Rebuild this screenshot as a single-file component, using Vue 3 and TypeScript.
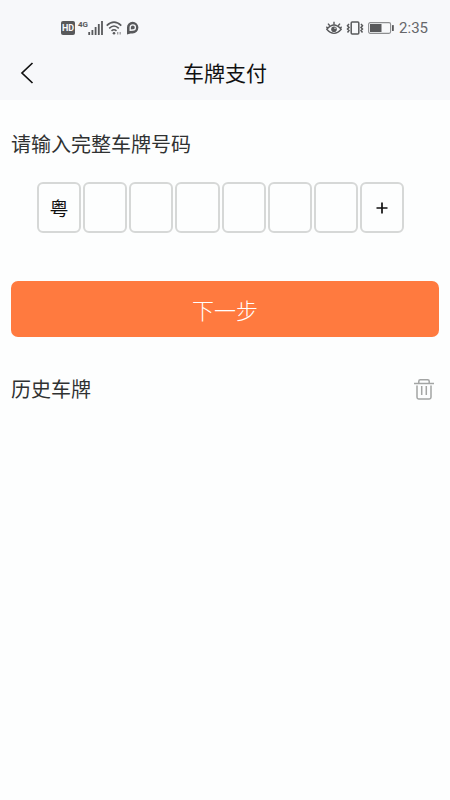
<script setup lang="ts">
import { ref } from 'vue'

const province = ref('粤')
const digits = ref<string[]>(['', '', '', '', '', ''])
const extended = ref(false)
</script>

<template>
  <div class="page">
    <header class="top">
      <div class="status">
        <div class="status-group left">
          <span class="hd">HD</span>
          <div class="signal">
            <span class="network">4G</span>
            <svg width="15" height="14" viewBox="0 0 15 14">
              <path d="M1.2 14v-3M4.4 14V9M7.6 14V6M10.8 14V3M14 14V0" stroke="#58595b" stroke-width="1.8" />
            </svg>
          </div>
          <svg class="status-icon" width="17" height="14" viewBox="0 0 17 14">
            <g fill="none" stroke="#58595b" stroke-width="1.6">
              <path d="M.7 4.6q7.3-7 14.6 0" />
              <path d="M3.2 7.3q4.8-4.6 9.6 0" />
              <path d="M5.5 9.9q2.5-2.3 5 0" />
            </g>
            <circle cx="8" cy="12.2" r="1.3" fill="#58595b" />
            <path d="M11.7 11v2.5M14.2 11v2.5" stroke="#9a9b9d" stroke-width="1.3" />
          </svg>
          <svg class="status-icon" width="13" height="14" viewBox="0 0 13 14">
            <path d="M6.6.8a5.8 5.8 0 0 1 0 11.6H4.6L1 13.4V6.6A5.7 5.7 0 0 1 6.6.8z" fill="#58595b" />
            <path d="M4.2 9.2V6.4a2.6 2.6 0 1 1 2.6 2.6z" fill="none" stroke="#f7f8fa" stroke-width="1.3" />
            <circle cx="6.8" cy="6.5" r="1.2" fill="#58595b" />
          </svg>
        </div>
        <div class="status-group">
          <svg class="status-icon" width="16" height="14" viewBox="0 0 16 14">
            <g fill="none" stroke="#58595b" stroke-width="1.4">
              <path d="M.8 8.3Q8-.3 15.2 8.3Q8 16.5.8 8.3z" />
              <path d="M8 3.8V.8M3.8 4.8L2 2.6M12.2 4.8L14 2.6M1.8 7L.3 5.8M14.2 7l1.5-1.2" />
            </g>
            <circle cx="8" cy="8.2" r="2.8" fill="#58595b" />
            <circle cx="9" cy="7.3" r=".7" fill="#f7f8fa" />
          </svg>
          <svg class="status-icon" width="18" height="14" viewBox="0 0 18 14">
            <g fill="none" stroke="#58595b" stroke-width="1.5">
              <rect x="5.2" y=".9" width="7.6" height="12.2" rx="1" />
              <path d="M3 3L1.5 4.8 3 6.4 1.5 8 3 9.6 1.5 11.4M15 3l1.5 1.8L15 6.4 16.5 8 15 9.6l1.5 1.8" />
            </g>
          </svg>
          <svg class="status-icon" width="26" height="12" viewBox="0 0 26 12">
            <rect x=".6" y=".6" width="22" height="10.8" rx="1.6" fill="none" stroke="#8d8e90" stroke-width="1.1" />
            <rect x="2" y="2" width="11.5" height="8" fill="#58595b" />
            <rect x="24" y="3" width="1.8" height="6" rx=".6" fill="#58595b" />
          </svg>
          <time class="clock">2:35</time>
        </div>
      </div>
      <nav class="nav">
        <button class="back" type="button" aria-label="返回">
          <svg width="14" height="22" viewBox="0 0 14 22">
            <path d="M12.5 1L2 11l10.5 10" fill="none" stroke="#111" stroke-width="1.7" />
          </svg>
        </button>
        <h1 class="title">车牌支付</h1>
      </nav>
    </header>

    <main class="content">
      <h2 class="heading">请输入完整车牌号码</h2>
      <form class="form" @submit.prevent>
        <div class="plate">
          <input v-model="province" class="cell" type="text" maxlength="1" aria-label="省份" />
          <input
            v-for="(_, i) in digits"
            :key="i"
            v-model="digits[i]"
            class="cell"
            type="text"
            maxlength="1"
            :aria-label="`第${i + 2}位`"
          />
          <button class="cell add" type="button" aria-label="新能源车牌" @click="extended = !extended">
            <svg width="12" height="12" viewBox="0 0 12 12">
              <path d="M6 .5v11M.5 6h11" stroke="#111" stroke-width="1.7" />
            </svg>
          </button>
        </div>
        <button class="next" type="submit">下一步</button>
      </form>
      <section class="history">
        <h2 class="heading">历史车牌</h2>
        <button class="clear" type="button" aria-label="清空历史">
          <svg width="20" height="22" viewBox="0 0 20 22">
            <g fill="none" stroke="#a3a5a4" stroke-width="1.5">
              <path d="M0 4.5h20" />
              <path d="M4.8 4V2.2Q4.8.8 6.3.8h7.4q1.5 0 1.5 1.4V4" />
              <path d="M3 6.5v11.8q0 1.7 1.7 1.7h10.6q1.7 0 1.7-1.7V6.5" />
              <path d="M7.7 7v9M12.3 7v9" />
            </g>
          </svg>
        </button>
      </section>
    </main>
  </div>
</template>

<style>
body {
  margin: 0;
  background: #fdfefe;
}
</style>

<style scoped>
.page {
  min-height: 100vh;
  background: #fdfefe;
  color: #303232;
  font-family: Roboto, "Noto Sans CJK SC", sans-serif;
}

button,
input {
  box-sizing: border-box;
  margin: 0;
  padding: 0;
  border: 0;
  background: none;
  color: inherit;
  font-family: inherit;
}

button {
  display: flex;
  align-items: center;
  justify-content: center;
  cursor: pointer;
}

svg {
  display: block;
}

.top {
  background: #f7f8fa;
}

.status {
  display: flex;
  align-items: center;
  justify-content: space-between;
  box-sizing: border-box;
  height: 48px;
  padding: 8px 22px 0 61px;
}

.status-group {
  display: flex;
  align-items: center;
  gap: 4px;
}

.left {
  gap: 3px;
}

.status-icon {
  flex: none;
}

.hd {
  width: 14px;
  border-radius: 2px;
  background: #58595b;
  color: #f7f8fa;
  font-size: 9px;
  font-weight: 700;
  line-height: 14px;
  text-align: center;
}

.signal {
  display: flex;
  align-items: flex-start;
}

.network {
  color: #58595b;
  font-family: "Liberation Sans Narrow", Roboto, sans-serif;
  font-size: 8px;
  font-weight: 700;
  line-height: 8px;
}

.clock {
  padding-left: 1px;
  color: #66676a;
  font-size: 15px;
  line-height: 20px;
}

.nav {
  display: grid;
  grid-template-columns: 54px 1fr 54px;
  align-items: center;
  height: 52px;
}

.back {
  height: 50px;
  align-self: start;
}

.title {
  margin: 0;
  color: #111;
  font-size: 21px;
  font-weight: 400;
  line-height: 32px;
  text-align: center;
}

.content {
  padding: 29px 11px;
}

.heading {
  margin: 0;
  font-size: 20px;
  font-weight: 400;
  line-height: 32px;
}

.plate {
  display: flex;
  gap: 2px;
  padding: 21px 35px 48px 26px;
}

.cell {
  flex: 1;
  min-width: 0;
  height: 51px;
  border: 2px solid #d6d8d7;
  border-radius: 6px;
  color: #111;
  font-size: 19px;
  text-align: center;
}

.next {
  width: 100%;
  height: 56px;
  border-radius: 7px;
  background: #ff7a3f;
  color: #fff;
  font-size: 22px;
  font-weight: 300;
}

.history {
  display: flex;
  align-items: center;
  justify-content: space-between;
  padding: 37px 5px 0 0;
}
</style>
